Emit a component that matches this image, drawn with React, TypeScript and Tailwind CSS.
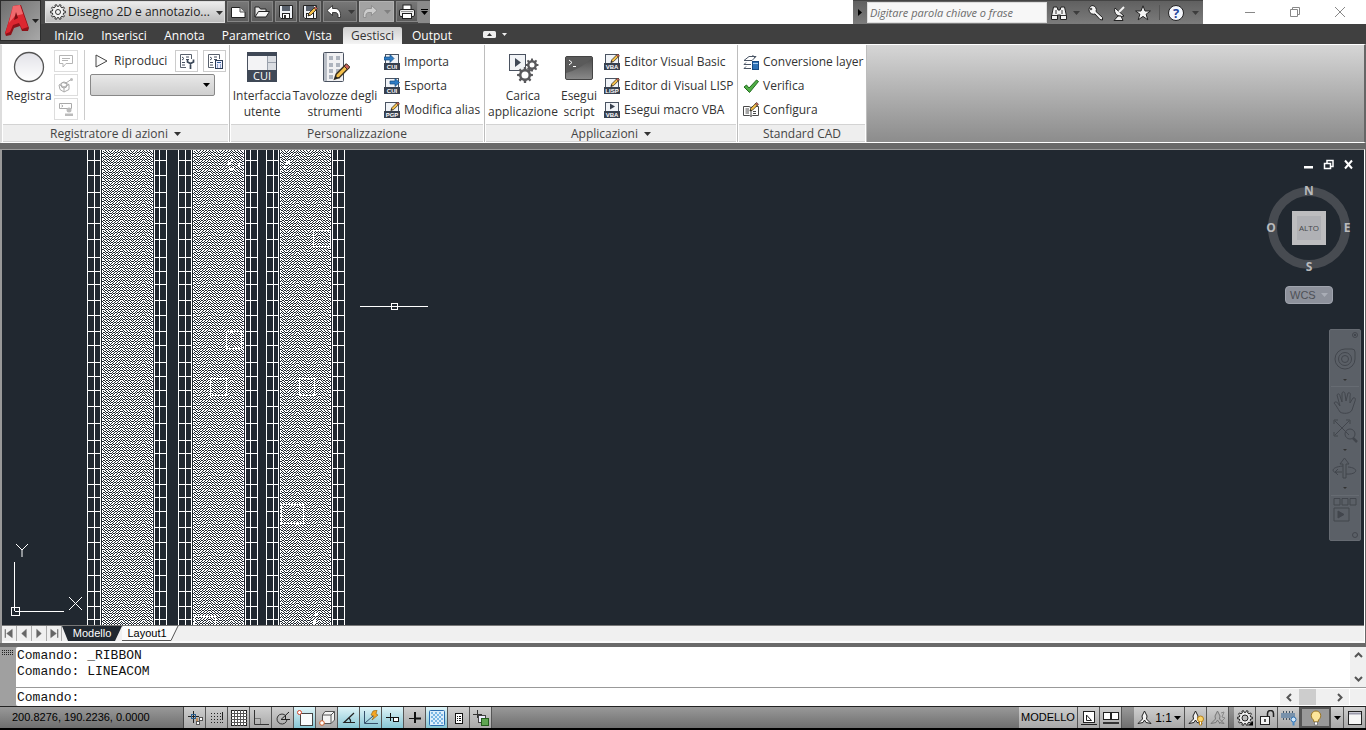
import React from 'react';

const TABS = [
  { label: 'Inizio', width: 'w-[56px]' },
  { label: 'Inserisci', width: 'w-[54px]' },
  { label: 'Annota', width: 'w-[67px]' },
  { label: 'Parametrico', width: 'w-[76px]' },
  { label: 'Vista', width: 'w-[49px]' },
  { label: 'Gestisci', width: 'w-[59px]' },
  { label: 'Output', width: 'w-[60px]' }
];

type IconProps = { size?: number; children: React.ReactNode };

function Icon({ size = 16, children }: IconProps) {
  return (
    <svg width={size} height={size} viewBox={`0 0 ${size} ${size}`} className="shrink-0" fill="none" aria-hidden="true">
      {children}
    </svg>);

}

function Caret({ className = 'fill-[#333]' }: { className?: string }) {
  return (
    <svg width="7" height="4" viewBox="0 0 7 4" className={`shrink-0 ${className}`} aria-hidden="true">
      <path d="M0 0H7L3.5 4Z" />
    </svg>);

}

/* cog outline shared by the workspace list, the loader and the status bar */
function gearPath(cx: number, cy: number, r: number, teeth = 8) {
  const pts: string[] = [];
  for (let i = 0; i < teeth; i++) {
    const a = i / teeth * Math.PI * 2;
    const step = Math.PI / teeth;
    [[-0.55, r * 0.76], [-0.35, r], [0.35, r], [0.55, r * 0.76]].forEach(([k, d]) => {
      pts.push(`${(cx + Math.cos(a + k * step) * d).toFixed(2)} ${(cy + Math.sin(a + k * step) * d).toFixed(2)}`);
    });
  }
  return `M${pts.join('L')}Z`;
}

function Pencil({ x = 0, y = 0, s = 1 }: { x?: number; y?: number; s?: number }) {
  return (
    <g transform={`translate(${x} ${y}) scale(${s})`}>
      <path d="M1 10L2 7L8 1L10 3L4 9Z" fill="#f5c04a" stroke="#3a3120" strokeWidth="0.9" />
      <path d="M7 2L9 4L10.500 2.500L8.500 0.500Z" fill="#c9605a" stroke="#3a3120" strokeWidth="0.6" />
      <path d="M1 10L1.600 8L3 9.300Z" fill="#222" />
    </g>);

}

/* small page icon with a dark caption strip: CUI, PGP, VBA, LISP */
function CaptionIcon({ text, kind }: { text: string; kind: 'in' | 'out' | 'edit' | 'play' }) {
  return (
    <Icon>
      <rect x="1.500" y="0.500" width="13" height="13" fill="#f1f4f8" stroke="#4a5462" />
      <rect x="0" y="9" width="16" height="7" fill="#38414f" />
      <text x="8" y="15" textAnchor="middle" className="fill-white font-['Liberation_Sans'] text-[6px] font-bold">{text}</text>
      {kind === 'in' && <path d="M0 3H6V0.500L10 4.500L6 8.500V6H0Z" fill="#2e7cc4" stroke="#12497f" strokeWidth="0.7" />}
      {kind === 'out' && <path d="M6 3H11V0.500L15.500 4.500L11 8.500V6H6Z" fill="#2e7cc4" stroke="#12497f" strokeWidth="0.7" />}
      {kind === 'edit' && <Pencil x={6} y={-0.5} s={0.9} />}
      {kind === 'play' && <path d="M6 1.500L11 4.500L6 7.500Z" fill="#38414f" />}
    </Icon>);

}

function QatButton({ label, width = 'w-[22px]', disabled = false, children }: {label: string;width?: string;disabled?: boolean;children: React.ReactNode;}) {
  return (
    <button
      aria-label={label}
      disabled={disabled}
      className={`${width} h-[21px] flex items-center justify-center gap-1.5 border ${
      disabled ? 'bg-[#a3a3a3] border-[#b2b2b2]' : 'bg-linear-to-b from-[#777] to-[#5c5c5c] border-[#868686]'}`
      }>
      {children}
    </button>);

}

function TitleBar() {
  return (
    <div className="h-6 flex items-start bg-white">
      <div className="h-6 flex items-start gap-0.5 bg-[#4a4a4a] pt-px pl-1">
        <div className="relative w-[180px] h-[22px]">
          <div className="absolute left-[5px] top-[3px] pointer-events-none">
            <Icon>
              <path d={gearPath(8, 8, 7.5, 10)} stroke="#333" fill="#f5f5f5" />
              <circle cx="8" cy="8" r="2.500" stroke="#333" />
            </Icon>
          </div>
          <select aria-label="Area di lavoro" className="appearance-none w-full h-full pl-[22px] text-[12px] text-[#222] bg-linear-to-b from-[#ececec] to-[#bdbdbd] border border-[#ddd]">
            <option>Disegno 2D e annotazio...</option>
          </select>
          <div className="absolute right-[2px] top-[10px] pointer-events-none"><Caret /></div>
        </div>
        <QatButton label="Nuovo">
          <Icon><path d="M1.500 3.500H10L15 8V13.500H1.500Z" fill="#fff" stroke="#222" /><path d="M10 3.500V8H15" fill="#ddd" stroke="#555" /></Icon>
        </QatButton>
        <QatButton label="Apri">
          <Icon><path d="M1 13V3H5L6.500 5H12V8" fill="#e8e8e8" stroke="#222" /><path d="M1 13L4.500 7.500H15.500L12 13Z" fill="#f6f6f6" stroke="#222" /></Icon>
        </QatButton>
        <QatButton label="Salva">
          <Icon><path d="M1.500 1.500H14.500V14.500H3L1.500 13Z" fill="#eef1f5" stroke="#222" /><rect x="4" y="2" width="8" height="5" fill="#59616d" /><rect x="4.500" y="9.500" width="7" height="5" fill="#fff" stroke="#222" /><rect x="6" y="11" width="2" height="3" fill="#333" /></Icon>
        </QatButton>
        <QatButton label="Salva con nome">
          <Icon><path d="M1.500 1.500H14.500V14.500H3L1.500 13Z" fill="#eef1f5" stroke="#222" /><rect x="4" y="2" width="8" height="5" fill="#59616d" /><rect x="4.500" y="9.500" width="7" height="5" fill="#fff" stroke="#222" /><Pencil x={5} y={2} s={1} /></Icon>
        </QatButton>
        <QatButton label="Annulla" width="w-[34px]">
          <Icon><path d="M1 6.500L6.500 1.500V4.500H9C13 4.500 15 8 14.500 13.500H12C12.500 10 11.500 8.500 9 8.500H6.500V11.500Z" fill="#fff" stroke="#222" strokeWidth="0.8" /></Icon>
          <Caret className="fill-[#3a3a3a]" />
        </QatButton>
        <QatButton label="Ripeti" width="w-[35px]" disabled>
          <Icon><path d="M15 6.500L9.500 1.500V4.500H7C3 4.500 1 8 1.500 13.500H4C3.500 10 4.500 8.500 7 8.500H9.500V11.500Z" fill="#ccc" stroke="#888" strokeWidth="0.8" /></Icon>
          <Caret className="fill-[#808080]" />
        </QatButton>
        <QatButton label="Stampa">
          <Icon><rect x="4" y="1" width="8" height="5" fill="#fff" stroke="#222" /><rect x="0.500" y="5.500" width="15" height="7" rx="1.500" fill="#eee" stroke="#222" /><rect x="3.500" y="9.500" width="9" height="5" fill="#fff" stroke="#222" /><path d="M2 7.500H14" stroke="#999" /></Icon>
        </QatButton>
        <button aria-label="Personalizza barra" className="w-3 h-[22px] -ml-0.5 flex flex-col items-center justify-center gap-px bg-[#8a8a8a]">
          <span className="w-[7px] h-px bg-black" />
          <Caret className="fill-black" />
        </button>
      </div>

      <div className="ml-auto h-6 flex items-center bg-linear-to-b from-[#606060] to-[#7c7c7c] border-t border-[#444]">
        <button aria-label="Comprimi ricerca" className="w-3.5 h-full flex items-center justify-center">
          <svg width="4" height="7" viewBox="0 0 4 7" aria-hidden="true"><path d="M0 0L4 3.500L0 7Z" /></svg>
        </button>
        <input aria-label="Cerca" placeholder="Digitare parola chiave o frase" className="w-[180px] h-[21px] px-0.5 bg-[#f7f7f7] font-['Open_Sans',sans-serif] text-[11px] italic placeholder:text-[#6b6b6b] border border-[#ddd]" />
        <button aria-label="Trova" className="w-9 h-full flex items-center justify-center gap-1.5">
          <Icon><path d="M2.500 2H6L7 5H9L10 2H13.500L15.500 11V14.500H9.500V10H6.500V14.500H0.500V11Z" fill="#f3f3f3" stroke="#222" /><path d="M1 10.500H6M10 10.500H15M5 5V9M11 5V9" stroke="#333" /></Icon>
          <Caret className="fill-[#3d3d3d]" />
        </button>
        <button aria-label="Subscription Center" className="w-6 h-full flex items-center justify-center">
          <Icon><path d="M5 0.500A4.300 4.300 0 1 0 8 9L13 14.500L15.500 15V12.500L9 6.500A4.300 4.300 0 0 0 5 0.500Z" fill="#f3f3f3" stroke="#222" /><circle cx="4" cy="4" r="1.300" fill="#555" /></Icon>
        </button>
        <button aria-label="Communication Center" className="w-6 h-full flex items-center justify-center">
          <Icon><path d="M4 3C2 8 7 13 13 11Z" fill="#f3f3f3" stroke="#222" /><path d="M8 7L13 2" stroke="#f3f3f3" strokeWidth="2" /><path d="M7 11L3 15.500H12L10 11Z" fill="#f3f3f3" stroke="#222" /></Icon>
        </button>
        <button aria-label="Preferiti" className="w-6 h-full flex items-center justify-center">
          <Icon><path d="M8 0.800L10 6H15.400L11.100 9.200L12.800 14.800L8 11.400L3.200 14.800L4.900 9.200L0.600 6H6Z" fill="#f3f3f3" stroke="#222" /></Icon>
        </button>
        <span className="w-px h-[15px] mx-1 bg-[#555]" />
        <button aria-label="Guida" className="w-[39px] h-full flex items-center justify-center gap-2">
          <Icon><circle cx="8" cy="8" r="7.500" fill="#f5f7fc" stroke="#222" /><text x="8" y="12.500" textAnchor="middle" className="fill-[#25449a] font-['Open_Sans'] text-[13px] font-bold">?</text></Icon>
          <Caret className="fill-[#3d3d3d]" />
        </button>
      </div>

      <div className="h-6 flex items-center pl-6 pr-1">
        <button aria-label="Riduci a icona" className="w-[45px] h-6 flex items-center justify-center"><span className="w-2.5 h-px bg-[#888]" /></button>
        <button aria-label="Ripristina" className="w-[45px] h-6 flex items-center justify-center">
          <Icon size={12}><path d="M1.500 3.500H8.500V10.500H1.500ZM3.500 3.500V1.500H10.500V8.500H8.500" stroke="#888" /></Icon>
        </button>
        <button aria-label="Chiudi" className="w-[45px] h-6 flex items-center justify-center">
          <Icon size={12}><path d="M1 1L11 11M11 1L1 11" stroke="#888" /></Icon>
        </button>
      </div>
    </div>);

}

function TabBar() {
  return (
    <div className="h-5 flex items-end bg-[#404040]" role="tablist">
      {TABS.map((tab) =>
      <button
        key={tab.label}
        role="tab"
        aria-selected={tab.label === 'Gestisci'}
        className={`${tab.width} h-[17px] leading-[17px] text-center text-[12px] ${
        tab.label === 'Gestisci' ? 'bg-linear-to-b from-[#cfcfcf] to-[#f4f4f4] text-[#333] rounded-t-xs' : 'text-white'}`
        }>
          {tab.label}
        </button>
      )}
      <button aria-label="Riduci barra multifunzione" className="h-5 flex items-center gap-1.5 pl-[21px]">
        <Icon size={13}><rect x="0" y="3" width="13" height="7" rx="1.500" fill="#eee" /><path d="M4 8L6.500 5L9 8Z" fill="#333" /></Icon>
        <svg width="5" height="3" viewBox="0 0 5 3" aria-hidden="true"><path d="M0 0H5L2.500 3Z" fill="#eee" /></svg>
      </button>
    </div>);

}

function Header() {
  return (
    <header className="flex bg-[#404040]">
      <button aria-label="Menu applicazione" className="w-[41px] h-[41px] shrink-0 flex items-center gap-0.5 pl-1 bg-linear-to-br from-[#6e6e6e] to-[#a8a8a8] border border-[#2c2c2c]">
        <svg width="25" height="35" viewBox="0 0 25 35" fill="none" aria-hidden="true">
          <path d="M9 3L16 2L24 25L23 28L17 28L15 23L9 25L6 32L1 33L0 30Z" fill="#8f1118" />
          <path d="M8 3L15 2L23 24L17 26L14 20L8 22L5 29L0 31Z" fill="#dc2730" />
          <path d="M8 3L15 2L18 11L10 13L4 20Z" fill="#f0686c" />
          <path d="M11 9L9 17L13 15Z" fill="#7b0e13" />
        </svg>
        <Caret className="fill-[#222]" />
      </button>
      <div className="flex-1 min-w-0">
        <TitleBar />
        <TabBar />
      </div>
    </header>);

}

function Panel({ title, width, menu = false, children }: {title: string;width: string;menu?: boolean;children: React.ReactNode;}) {
  return (
    <section className={`${width} shrink-0 flex flex-col bg-white border-r border-[#bdbdbd]`}>
      <div className="h-[79px] flex px-1 pt-[5px]">{children}</div>
      <div className="h-[18px] pt-px mx-px flex items-center justify-center gap-1.5 bg-[#eee] border-y border-[#d3d3d3] text-[#444]">
        <span>{title}</span>
        {menu && <Caret />}
      </div>
    </section>);

}

function LargeButton({ lines, width, children }: {lines: string[];width: string;children: React.ReactNode;}) {
  return (
    <button className={`${width} shrink-0 flex flex-col items-center whitespace-nowrap`}>
      <span className="h-[38px] pt-px">{children}</span>
      {lines.map((line) => <span key={line} className="h-4 leading-4">{line}</span>)}
    </button>);

}

function RowButton({ label, children }: {label: string;children: React.ReactNode;}) {
  return (
    <button className="h-6 flex items-center gap-1 whitespace-nowrap">
      {children}
      <span>{label}</span>
    </button>);

}

function Ribbon() {
  return (
    <div className="h-[99px] flex bg-linear-to-b from-[#d6d6d6] to-[#8c8c8c] border-y border-white border-l-2 border-l-[#ddd] border-r-2 border-r-[#666]">
      <Panel title="Registratore di azioni" width="w-[228px]" menu>
        <LargeButton lines={['Registra']} width="w-[46px]">
          <Icon size={32}>
            <defs><linearGradient id="rec" x1="0" y1="0" x2="0" y2="1"><stop stopColor="#e2e2e8" /><stop offset="1" stopColor="#fff" /></linearGradient></defs>
            <circle cx="16" cy="16" r="14.500" fill="url(#rec)" stroke="#555" strokeWidth="1.300" />
          </Icon>
        </LargeButton>
        <div className="flex flex-col gap-0.5 pl-0.5 pr-1.5 border-r border-[#ccc] h-[70px]">
          <button aria-label="Inserisci messaggio" className="w-6 h-[22px] flex items-center justify-center border border-[#ddd]">
            <Icon><path d="M1.500 2.500H14.500V10.500H8L5 14V10.500H1.500ZM4 5.500H12M4 7.500H10" stroke="#b5b5b5" /></Icon>
          </button>
          <button aria-label="Inserisci punto base" className="w-6 h-[22px] flex items-center justify-center border border-[#ddd]">
            <Icon><path d="M1 8L5 5.500L11 7.500V12.500L6 15L2 12.500ZM6 10L11 7.500M2 8L6 10V15M8 6L13 2.500" stroke="#aaa" /><circle cx="13.500" cy="2.500" r="1.500" fill="#bbb" /><circle cx="6" cy="8" r="3" stroke="#aaa" /></Icon>
          </button>
          <button aria-label="Richiesta input utente" className="w-6 h-[22px] flex items-center justify-center border border-[#ddd]">
            <Icon><path d="M1.500 2.500H13.500V7.500H1.500ZM3.500 4L5 5L3.500 6" stroke="#aaa" /><circle cx="11" cy="9" r="2.500" fill="#bbb" /><path d="M7 15V12.500H15V15Z" fill="#bbb" /></Icon>
          </button>
        </div>
        <div className="flex flex-col gap-0.5 pl-[5px]">
          <div className="h-[22px] flex items-center gap-[5px]">
            <button className="w-[80px] h-[22px] flex items-center gap-1 pl-1">
              <Icon><path d="M2 2L13 8L2 14Z" stroke="#444" fill="#fafafa" /></Icon>
              Riproduci
            </button>
            {['Preferenze', 'Gestione macro azioni'].map((name, i) =>
            <button key={name} aria-label={name} className="w-[23px] h-[22px] flex items-center justify-center border border-[#ccc]">
                <Icon>
                  <path d="M12.500 6V1.500H1.500V14.500H7" fill="#fff" stroke="#59616d" />
                  <path d="M3 4L5 5.500L3 7M7 4H10M7 6.500H10M3 9.500H6M3 12H6" stroke="#444f60" />
                  {i === 0 ?
                <path d="M8.500 6.500V9L11.500 10.500L14.500 9V6.500M11.500 10V16" stroke="#3a4757" strokeWidth="1.700" /> :
                <><rect x="8.500" y="7.500" width="7" height="8" fill="#eef" stroke="#2d3e57" /><path d="M10 9.500H14M10 12H11M13 12H14M10 14H11M13 14H14" stroke="#2d5d95" /></>}
                </Icon>
              </button>
            )}
          </div>
          <div className="relative w-[125px] h-[22px]">
            <select aria-label="Macro azioni disponibili" className="appearance-none w-full h-full rounded-xs border border-[#888] bg-linear-to-b from-[#e8e8e8] to-[#cfcfcf]">
              <option></option>
            </select>
            <div className="absolute right-[5px] top-[9px] pointer-events-none"><Caret className="fill-black" /></div>
          </div>
        </div>
      </Panel>

      <Panel title="Personalizzazione" width="w-[255px]" >
        <LargeButton lines={['Interfaccia', 'utente']} width="w-[56px]">
          <Icon size={32}>
            <rect x="1.500" y="1.500" width="29" height="29" fill="#f3f3f5" stroke="#4a5260" />
            <rect x="1" y="1" width="30" height="4" fill="#3f4856" />
            <rect x="22" y="5" width="8" height="14" fill="#dadde2" />
            <path d="M21.500 5V19M22 11.500H30" stroke="#9aa1ac" />
            <rect x="1" y="19" width="30" height="12" fill="#3f4856" />
            <text x="16" y="29" textAnchor="middle" className="fill-white font-['Open_Sans'] text-[11px]">CUI</text>
          </Icon>
        </LargeButton>
        <LargeButton lines={['Tavolozze degli', 'strumenti']} width="w-[90px]">
          <Icon size={32}>
            <rect x="4.500" y="1.500" width="20" height="29" rx="1" fill="#f1f1f3" stroke="#4a5260" />
            <rect x="5" y="2" width="3" height="28" fill="#b9bec6" />
            {[5, 12, 18, 24].map((y) => <path key={y} d={`M10 ${y}H14V${y + 4}H10ZM17 ${y}H21V${y + 4}H17Z`} fill="#aeb4be" />)}
            <Pencil x={14} y={12} s={1.6} />
          </Icon>
        </LargeButton>
        <div className="flex flex-col pl-1">
          <RowButton label="Importa"><CaptionIcon text="CUI" kind="in" /></RowButton>
          <RowButton label="Esporta"><CaptionIcon text="CUI" kind="out" /></RowButton>
          <RowButton label="Modifica alias"><CaptionIcon text="PGP" kind="edit" /></RowButton>
        </div>
      </Panel>

      <Panel title="Applicazioni" width="w-[253px]" menu>
        <LargeButton lines={['Carica', 'applicazione']} width="w-[68px]">
          <Icon size={32}>
            <rect x="2.500" y="3.500" width="16" height="16" fill="#f1f3f6" stroke="#4a5260" />
            <path d="M8 7L14 11.500L8 16Z" fill="#3f4856" />
            <path d={gearPath(25, 14, 6.5)} fill="#59595c" /><circle cx="25" cy="14" r="2.500" fill="#fff" />
            <path d={gearPath(18, 24, 8)} fill="#59595c" /><circle cx="18" cy="24" r="3.500" fill="#fff" />
          </Icon>
        </LargeButton>
        <LargeButton lines={['Esegui', 'script']} width="w-[44px]">
          <Icon size={32}>
            <defs><linearGradient id="scr" x1="0" y1="0" x2="0" y2="1"><stop stopColor="#4a4a4a" /><stop offset="1" stopColor="#8a8a8a" /></linearGradient></defs>
            <rect x="2.500" y="5.500" width="27" height="23" rx="1.500" fill="url(#scr)" stroke="#444" />
            <path d="M3 22Q18 18 29 7V6H3Z" fill="#5a5a5a" />
            <path d="M6 9L9 11.500L6 14M10 15.500H13" stroke="#fff" />
          </Icon>
        </LargeButton>
        <div className="flex flex-col pl-[3px]">
          <RowButton label="Editor Visual Basic"><CaptionIcon text="VBA" kind="edit" /></RowButton>
          <RowButton label="Editor di Visual LISP"><CaptionIcon text="LISP" kind="edit" /></RowButton>
          <RowButton label="Esegui macro VBA"><CaptionIcon text="VBA" kind="play" /></RowButton>
        </div>
      </Panel>

      <Panel title="Standard CAD" width="w-[129px]">
        <div className="flex flex-col pl-px">
          <RowButton label="Conversione layer">
            <Icon><path d="M1 6.500L6 2.500H13L9 6.500ZM12 4L9.500 1M1 10.500L3 8.500M1 10.500H8M1 14.500H8M1 14.500L3 12.500" stroke="#4a5565" /><rect x="9.500" y="7.500" width="6" height="8" fill="#2f72b5" stroke="#174a82" /><path d="M10 9.500H15" stroke="#a8cdf0" /></Icon>
          </RowButton>
          <RowButton label="Verifica">
            <Icon><path d="M1 9L3.500 7L6 10L13.500 2L15.500 3.500L6.500 14.500Z" fill="#4fae45" stroke="#236b20" /></Icon>
          </RowButton>
          <RowButton label="Configura">
            <Icon><path d="M0.500 4.500H6L8 5.500L10 4.500H15.500V13.500H9.500L8 14.500L6.500 13.500H0.500ZM8 5.500V14M2.500 7H6M2.500 9H6M2.500 11H6M10 9.500H13M10 11.500H13" stroke="#4a4a4a" /><Pencil x={6} y={0} s={0.9} /></Icon>
          </RowButton>
        </div>
      </Panel>
    </div>);

}

/* each strip: outer lines on both sides, rungs between them, hatch in the middle */
const STRIPS = [
  { left: [87, 94, 100], right: [154, 159, 166] },
  { left: [178, 185, 191], right: [245, 250, 257] },
  { left: [266, 273, 278], right: [332, 337, 344] }
];
const RUNGS = [10, 25, 42, 57, 73, 89, 107, 121, 134, 150, 165, 181, 195, 212, 226, 240, 256, 273, 290, 303, 318, 334, 347, 361, 377, 392, 409, 425, 441, 456, 469];
const BLOCKS = [[313, 80, 17, 16], [226, 181, 15, 17], [210, 228, 16, 17], [299, 228, 15, 17], [281, 354, 22, 19], [194, 466, 21, 12]];

function herringbone() {
  let d = '';
  for (let y = 0; y < 16; y++) {
    for (let x = 0; x < 22; x++) {
      const tri = x < 11 ? x : 22 - x;
      if ((y * 7 + Math.floor(tri * 5.4)) % 16 < 9) d += `M${x} ${y}h1v1h-1Z`;
    }
  }
  return d;
}

function Drawing() {
  return (
    <svg className="absolute top-0 -left-0.5 w-full h-full" shapeRendering="crispEdges" aria-hidden="true">
      <defs>
        <pattern id="hatch" width="22" height="16" patternUnits="userSpaceOnUse">
          <path d={herringbone()} fill="#fff" />
        </pattern>
      </defs>
      {STRIPS.map(({ left, right }) =>
      <g key={left[0]} fill="#fff">
          {[...left, ...right].map((x) => <rect key={x} x={x} y="0" width="1" height="100%" />)}
          <rect x={left[2] + 3} y="0" width={right[0] - left[2] - 5} height="100%" fill="url(#hatch)" />
          <path d={`M${left[2] + 2}.500 0V2000M${right[0] - 2}.500 0V2000`} stroke="#fff" strokeDasharray="3 1" />
          {RUNGS.map((y) =>
        <path key={y} d={`M${left[0]} ${y}H${left[2]}V${y + 1}H${left[0]}ZM${right[0]} ${y}H${right[2]}V${y + 1}H${right[0]}Z`} />
        )}
        </g>
      )}
      {BLOCKS.map(([x, y, w, h]) =>
      <rect key={`${x}-${y}`} x={x + 0.5} y={y + 0.5} width={w} height={h} fill="none" stroke="#fff" />
      )}
      <path d="M228 12h3v-3h2v3h-2v3h-3ZM229 18h5v2h-5ZM238 13h2v4h-2ZM286 11h4v3h-4ZM284 16h3v2h-3ZM315 463h3v3h-3ZM313 470h3v4h-3Z" fill="#fff" />
      {/* crosshair */}
      <path d="M360 156.500H428M391.500 153.500H397.500V159.500H391.500Z" stroke="#fff" fill="none" />
    </svg>);

}

function UcsIcon() {
  return (
    <svg width="76" height="76" viewBox="0 0 76 76" className="absolute left-2 bottom-1.5" fill="none" stroke="#fff" aria-hidden="true">
      <path d="M4.500 68V19M5 68.500H54M1.500 64.500H9.500V72.500H1.500Z" shapeRendering="crispEdges" />
      <path d="M6 1L12 7L18 1M12 7V14M59 54L72 67M72 54L59 67" />
    </svg>);

}

function ViewCube() {
  return (
    <svg width="92" height="92" viewBox="0 0 92 92" aria-label="ViewCube">
      <circle cx="46" cy="46" r="36.500" fill="none" stroke="#474b51" strokeWidth="9" />
      <rect x="29" y="29" width="34" height="34" fill="#bdbdbf" />
      <rect x="34" y="34" width="24" height="24" fill="#b0b1b5" />
      <text x="46" y="49" textAnchor="middle" className="fill-[#44464a] font-['Liberation_Sans_Narrow','Open_Sans'] text-[8px]">ALTO</text>
      <g className="fill-[#b9babc] font-['Open_Sans'] text-[12px] font-bold" textAnchor="middle">
        <text x="46" y="13">N</text>
        <text x="46" y="89">S</text>
        <text x="8" y="50">O</text>
        <text x="84" y="50">E</text>
      </g>
    </svg>);

}

function NavBar() {
  return (
    <div className="w-8 h-[212px] rounded-xs bg-[#5b6067] border border-[#666b72]">
      <svg width="30" height="210" viewBox="0 0 30 210" fill="none" stroke="#42464d" aria-label="Barra di navigazione">
        <circle cx="25" cy="5" r="2.500" /><path d="M24 4L26 6M26 4L24 6" />
        <path d="M15 19H22Q25 19 25 22V29A10 10 0 1 1 15 19Z" /><circle cx="15" cy="29" r="6.500" /><circle cx="15" cy="29" r="3.500" />
        <path d="M1 56.500H29M1 165.500H29" stroke="#666b72" />
        <path d="M10 82C8 79 6 75 4 73C5 71 8 72 9 75L10 76L7 65C8 63 10 64 10 66L12 72L12 63C13 61 15 62 15 64L16 71L18 63C20 62 21 64 20 66L20 73L23 68C25 67 26 69 25 71L22 80C20 84 13 84 10 82Z" />
        <path d="M5 91L19 105M19 91L5 105M4 94V90H8M16 90H20V94M4 102V106H8" /><circle cx="20" cy="104" r="5" /><path d="M23 108L27 112" strokeWidth="2.500" />
        <path d="M13 148V134H10L14.500 128L19 134H16V148Z" /><path d="M12 142H5L8 139M5 142L8 145M13 136C1 137 1 142 7 143M18 137C30 138 27 145 16 144" />
        <path d="M4 168.500H10V175H4ZM12 168.500H18V175H12ZM20 168.500H26V175H20ZM4 178H19V191H4Z" /><path d="M8 181L14 184.500L8 188Z" fill="#42464d" />
        <path d="M13 49H17L15 51ZM13 119H17L15 121ZM13 157H17L15 159Z" fill="#333" stroke="none" />
        <circle cx="25" cy="205" r="2.500" />
      </svg>
    </div>);

}

function Viewport() {
  return (
    <main className="relative flex-1 min-h-[300px] overflow-hidden bg-[#212830]">
      <Drawing />
      <UcsIcon />
      <div className="absolute right-[10px] top-[8px] flex gap-[9px] h-3 items-center">
        <button aria-label="Riduci disegno" className="flex"><Icon size={11}><rect x="1" y="7" width="9" height="2.500" fill="#fff" /></Icon></button>
        <button aria-label="Ripristina disegno" className="flex"><Icon size={11}><path d="M1.500 4.500H7.500V9.500H1.500ZM4 4V1.500H10V7.500H8" stroke="#fff" strokeWidth="1.500" /></Icon></button>
        <button aria-label="Chiudi disegno" className="flex"><Icon size={11}><path d="M2 1.500L9 9.500M9 1.500L2 9.500" stroke="#fff" strokeWidth="2" /></Icon></button>
      </div>
      <div className="absolute right-[9px] top-[32px]"><ViewCube /></div>
      <button className="absolute right-[31px] top-[136px] w-12 h-[18px] px-1 flex items-center justify-between rounded-sm bg-[#8d919b] border border-[#a0a4ae] text-[11px] text-[#4d5056] font-['Liberation_Sans',sans-serif]">
        WCS
        <Caret className="fill-[#a9adb6]" />
      </button>
      <div className="absolute right-[3px] top-[179px]"><NavBar /></div>
    </main>);

}

const PAGERS = [
  { label: 'Prima scheda', d: 'M3.500 3V12M11 3V12L5 7.500Z' },
  { label: 'Scheda precedente', d: 'M10 3V12L5 7.500Z' },
  { label: 'Scheda successiva', d: 'M5 3V12L10 7.500Z' },
  { label: 'Ultima scheda', d: 'M11.500 3V12M4 3V12L10 7.500Z' }
];

function LayoutTabs() {
  return (
    <div className="h-[18px] flex bg-[#f0f0f0] border-t border-[#777] border-b-2 border-b-[#fafafa]">
      {PAGERS.map((p) =>
      <button key={p.label} aria-label={p.label} className="w-[15px] h-[15px] flex items-center justify-center border-r border-[#aaa]">
          <svg width="15" height="15" viewBox="0 0 15 15" fill="#666" aria-hidden="true"><path d={p.d} stroke="#666" strokeWidth="0.5" /><path d={p.d.startsWith('M3.500') ? 'M3 3H4V12H3Z' : p.d.startsWith('M11.500') ? 'M11 3H12V12H11Z' : ''} /></svg>
        </button>
      )}
      <button className="relative w-[60px] h-[15px] flex items-center justify-center text-white">
        <svg width="60" height="15" viewBox="0 0 60 15" className="absolute inset-0" aria-hidden="true"><path d="M0 0H60L53 15H6Z" fill="#212830" /></svg>
        <span className="relative font-['Liberation_Sans',sans-serif] text-[11px]">Modello</span>
      </button>
      <button className="relative w-[58px] h-[15px] flex items-center justify-center text-black">
        <svg width="58" height="15" viewBox="0 0 58 15" className="absolute inset-0" aria-hidden="true"><path d="M0 0L-6 14.500H49L56 0" fill="#fafafa" stroke="#555" /></svg>
        <span className="relative pr-2 font-['Liberation_Sans',sans-serif] text-[11px]">Layout1</span>
      </button>
    </div>);

}

function Chevron({ d }: {d: string;}) {
  return <svg width="9" height="9" viewBox="0 0 9 9" fill="none" stroke="#555" strokeWidth="2" aria-hidden="true"><path d={d} /></svg>;
}

function CommandWindow() {
  return (
    <div className="h-[59px] flex bg-[#a0a0a0]">
      <div className="w-4 shrink-0 pt-[3px] pl-0.5">
        <svg width="12" height="5" viewBox="0 0 12 5" stroke="#222" strokeDasharray="1 1" aria-hidden="true"><path d="M0 0.500H12M0 2.500H12M0 4.500H12" /></svg>
      </div>
      <div className="flex-1 min-w-0 flex flex-col bg-white rounded-l-xs font-['Liberation_Mono',monospace] text-[13px] leading-4 text-[#111]">
        <div className="h-[41px] flex border-b border-[#999]">
          <div className="flex-1 pl-px pt-px">
            <p>Comando: _RIBBON</p>
            <p>Comando: LINEACOM</p>
          </div>
          <div className="w-4 flex flex-col items-center justify-between py-1 bg-[#f0f0f0]">
            <button aria-label="Scorri su"><Chevron d="M1 6L4.500 2.500L8 6" /></button>
            <button aria-label="Scorri giù"><Chevron d="M1 3L4.500 6.500L8 3" /></button>
          </div>
        </div>
        <div className="h-[18px] flex items-center">
          <label htmlFor="cmd" className="pl-px pt-0.5">Comando:</label>
          <input id="cmd" className="flex-1 min-w-0 h-4 px-1 outline-none" />
          <div className="w-[69px] h-4 flex items-center bg-[#f0f0f0] mr-px">
            <button aria-label="Scorri a sinistra" className="w-[19px] flex justify-center"><Chevron d="M6 1L2.500 4.500L6 8" /></button>
            <span className="w-[17px] h-4 bg-[#cdcdcd]" />
            <button aria-label="Scorri a destra" className="ml-auto w-[19px] flex justify-center"><Chevron d="M3 1L6.500 4.500L3 8" /></button>
          </div>
          <span className="w-4 h-4 bg-[#f0f0f0]" />
        </div>
      </div>
    </div>);

}

const TOGGLES = [
  { label: 'Vincoli inferiti', on: false, icon: <><path d="M6.500 1V13M1 6.500H12" stroke="#222" /><rect x="4.500" y="4.500" width="4" height="4" stroke="#2b5f8f" /><path d="M10 8V13H13" stroke="#c60" /><rect x="9.500" y="11.500" width="3" height="3" fill="#fff" stroke="#555" /><rect x="12.500" y="7.500" width="3" height="3" fill="#fff" stroke="#555" /></> },
  { label: 'Snap', on: false, icon: <><path d="M2 3.500H12M2 6.500H12M2 9.500H12M2 12.500H12" stroke="#222" strokeDasharray="1 2" /><path d="M13.500 2V10M13.500 12V13" stroke="#222" /></> },
  { label: 'Griglia', on: false, icon: <><rect x="0.500" y="0.500" width="15" height="15" fill="#fff" stroke="#222" /><path d="M3.500 0V16M6.500 0V16M9.500 0V16M12.500 0V16M0 3.500H16M0 6.500H16M0 9.500H16M0 12.500H16" stroke="#555" /></> },
  { label: 'Orto', on: false, icon: <><path d="M1.500 0V14.500H16" stroke="#333" /><path d="M2 8.500H7.500V14" stroke="#777" /></> },
  { label: 'Polare', on: false, icon: <><path d="M11 6A5 5 0 1 0 12 9.500" stroke="#333" /><path d="M14 2L6 9.500H15M10.500 5.500V10" stroke="#222" /></> },
  { label: 'Osnap', on: true, icon: <><rect x="3.500" y="3.500" width="12" height="12" fill="#f8fbfc" stroke="#444" /><circle cx="2.500" cy="2.500" r="2" fill="#fff" stroke="#d0452a" /></> },
  { label: 'Osnap 3D', on: false, icon: <><path d="M3.500 5L6 1.500H15.500V10L12 13.500H3.500ZM3.500 5H12V13.500M12 5L15.500 1.500" fill="#f4f4f4" stroke="#555" /><circle cx="3" cy="13" r="2.300" fill="#fff" stroke="#d0602a" /></> },
  { label: 'Puntamento', on: true, icon: <path d="M13 3L3 12.500H14M8 8C9 9 10 10 9.500 12" stroke="#222" strokeWidth="1.200" /> },
  { label: 'UCS dinamico', on: true, icon: <><path d="M1.500 1V13.500H15M2 13L10 6" stroke="#35506a" /><path d="M10 1L14 0L13 4L15 5L9 10L11 6L8 5Z" fill="#f5a623" stroke="#8a5a0a" strokeWidth="0.600" /></> },
  { label: 'Input dinamico', on: true, icon: <><path d="M5.500 3V11M1 7.500H10" stroke="#111" /><rect x="8.500" y="7.500" width="5" height="4" fill="#fff" stroke="#111" /></> },
  { label: 'Spessore linea', on: false, icon: <><path d="M8 2V13" stroke="#111" strokeWidth="2" /><path d="M2 8.500H9" stroke="#111" /><path d="M8 8.500H14" stroke="#111" strokeWidth="2" /></> },
  { label: 'Trasparenza', on: true, icon: <><rect x="0.500" y="0.500" width="15" height="15" rx="1" fill="#dceefb" stroke="#2a6db0" /><path d="M2 3H14M2 7H14M2 11H14" stroke="#7ab6e4" strokeWidth="2" strokeDasharray="2 2" /><path d="M4 5H14M4 9H14M4 13H14" stroke="#7ab6e4" strokeWidth="2" strokeDasharray="2 2" /></> },
  { label: 'Proprietà rapide', on: false, icon: <><rect x="4.500" y="3.500" width="7" height="10" fill="#fff" stroke="#111" /><path d="M6 6.500H7M8 6.500H10M6 8.500H7M8 8.500H10M6 10.500H7M8 10.500H10" stroke="#111" /></> },
  { label: 'Ciclo di selezione', on: false, icon: <><path d="M4.500 0V8M0 4.500H9" stroke="#333" /><rect x="5.500" y="5.500" width="7" height="7" fill="#eef" stroke="#444" /><rect x="8.500" y="8.500" width="7" height="7" fill="#5fa552" stroke="#245d1e" /></> }
];

function StatusButton({ label, width = 'w-[22px]', on = false, children }: {label: string;width?: string;on?: boolean;children: React.ReactNode;}) {
  return (
    <button
      aria-label={label}
      className={`${width} h-[21px] shrink-0 flex items-center justify-center gap-0.5 border-r border-[#555] ${
      on ? 'bg-linear-to-b from-[#dff4f8] to-[#86c6d4]' : 'bg-linear-to-b from-[#cfcfcf] to-[#a8a8a8]'}`
      }>
      {children}
    </button>);

}

/* the three-pointed annotation scale mark */
function ScaleMark({ muted = false }: {muted?: boolean;}) {
  return <path d="M7.500 1L10 6L9.500 9L14 13.500L9 12.500L7.500 10L6 12.500L1 13.500L5.500 9L5 6Z" fill={muted ? '#b5b5b5' : '#f2f2f2'} stroke={muted ? '#777' : '#222'} />;
}

function StatusBar() {
  return (
    <footer className="h-6 flex items-start bg-linear-to-b from-[#999] to-[#6f6f6f] border-t border-[#222] border-b-2 border-b-black font-['Liberation_Sans',sans-serif] text-[12px] text-black">
      <output className="w-[184px] h-[21px] pl-3 flex items-center text-[11px] shrink-0 border-r border-[#444]">200.8276, 190.2236, 0.0000</output>
      {TOGGLES.map((t) => <StatusButton key={t.label} label={t.label} on={t.on}><Icon>{t.icon}</Icon></StatusButton>)}
      <div className="ml-auto flex">
        <StatusButton label="Modello" width="w-[59px]"><span className="text-[11px]">MODELLO</span></StatusButton>
        <StatusButton label="Layout"><Icon><rect x="2.500" y="1.500" width="11" height="11" fill="#fff" stroke="#222" /><path d="M5.500 5V10.500H10.500Z" stroke="#222" /><path d="M0 14.500H16" stroke="#222" /></Icon></StatusButton>
        <StatusButton label="Visualizzazione rapida"><Icon><rect x="0.500" y="2.500" width="7" height="7" fill="#fff" stroke="#222" /><rect x="8.500" y="2.500" width="7" height="7" fill="#fff" stroke="#222" /><rect x="0" y="12" width="16" height="2" fill="#333" /></Icon></StatusButton>
        <span className="w-3" />
        <StatusButton label="Scala annotazione" width="w-[51px]">
          <Icon><ScaleMark /></Icon>
          <span>1:1</span>
          <Caret className="fill-black" />
        </StatusButton>
        <StatusButton label="Visibilità annotazione"><Icon><ScaleMark /><circle cx="12.500" cy="9" r="3" fill="#fbd56b" stroke="#b7811c" /><path d="M11.500 12V15H13.500V12" fill="#fff" stroke="#b7811c" /></Icon></StatusButton>
        <StatusButton label="Scale automatiche"><Icon><ScaleMark muted /><path d="M11 3L14 2L12 7L15 8L9 14" stroke="#888" /></Icon></StatusButton>
        <span className="w-[5px]" />
        <StatusButton label="Area di lavoro"><Icon><path d={gearPath(8, 8, 7.5, 10)} fill="#eee" stroke="#222" /><circle cx="8" cy="8" r="3" fill="#bbb" stroke="#222" /><path d="M11 15.500H16V11Z" fill="#000" /></Icon></StatusButton>
        <StatusButton label="Blocca barre"><Icon><rect x="1.500" y="6.500" width="9" height="8" fill="#f5f5f5" stroke="#222" /><path d="M8.500 6V3.500A3 3 0 0 1 14.500 3.500V7" stroke="#222" strokeWidth="1.500" /><path d="M6 9V12" stroke="#222" strokeWidth="1.500" /></Icon></StatusButton>
        <StatusButton label="Accelerazione hardware"><Icon><path d="M0 3H14V8H0Z" fill="#7891ab" /><path d="M2.500 1V3M5.500 1V3M8.500 1V3M11.500 1V3M2.500 8V10M5.500 8V10M8.500 8V10" stroke="#456" /><circle cx="12.500" cy="9.500" r="2.500" fill="#cfe6fa" stroke="#2a6db0" /><path d="M12.500 12V15.500" stroke="#4a8cc8" strokeWidth="2" /></Icon></StatusButton>
        <button aria-label="Isola oggetti" className="w-[31px] h-[21px] flex items-center justify-center bg-[#999] border-2 border-[#555]"><Icon><path d="M5.500 10C1 6 4 1 8 1S15 6 10.500 10L10 12H6Z" fill="#fde59a" stroke="#9a7422" /><path d="M6.500 12H9.500V15H6.500Z" fill="#fff" stroke="#555" strokeWidth="0.600" /></Icon></button>
        <StatusButton label="Menu barra di stato" width="w-[13px]"><Caret className="fill-black" /></StatusButton>
        <StatusButton label="Schermo intero"><Icon><rect x="1.500" y="1.500" width="13" height="13" fill="#f5f5f5" stroke="#222" /><path d="M2 3.500H14" stroke="#99a" strokeWidth="2" /></Icon></StatusButton>
      </div>
    </footer>);

}

export default function App() {
  return (
    <div className="min-h-screen w-full flex flex-col bg-[#696969] font-['Open_Sans',sans-serif] text-[12px] text-[#333]">
      <Header />
      <Ribbon />
      <div className="flex-1 flex flex-col mt-1.5 mr-px border-t border-l-2 border-r border-t-[#999] border-l-[#999] border-r-white">
        <Viewport />
        <LayoutTabs />
      </div>
      <div className="h-1 bg-[#696969]" />
      <CommandWindow />
      <StatusBar />
    </div>);

}
